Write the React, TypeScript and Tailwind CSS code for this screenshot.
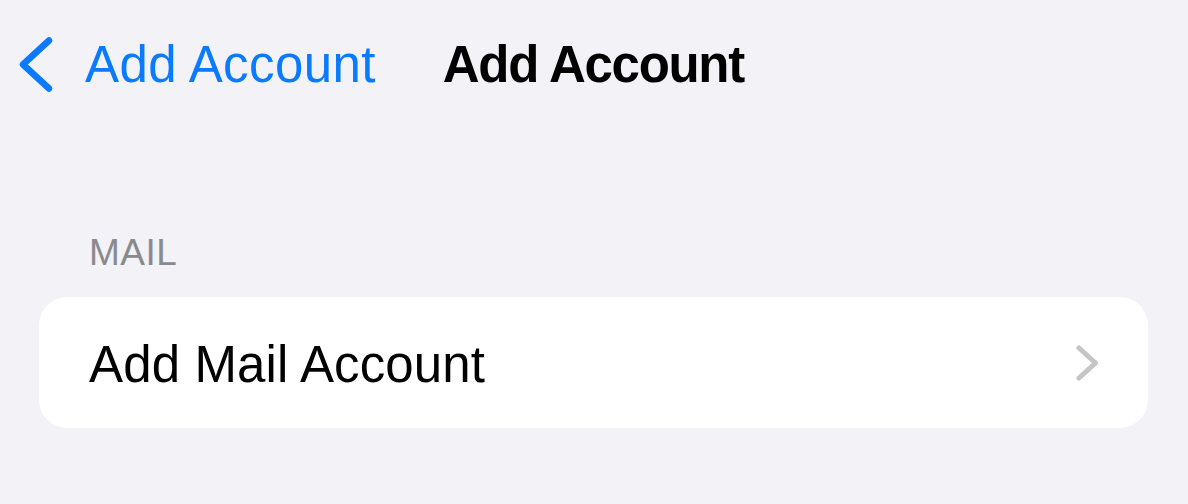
import React from "react";

export default function App() {
  const font = { fontFamily: '"Liberation Sans", Arial, sans-serif' };
  return (
    <div className="w-[1188px] h-[504px] bg-[#f2f2f7] overflow-hidden" style={font}>
      <div className="flex items-center h-[55px] mt-[37px] pl-[19px]">
        <svg width="34" height="55" viewBox="0 0 34 55" className="shrink-0">
          <polyline points="30,3.5 4,27.5 30,51.5" fill="none" stroke="#0a7aff" strokeWidth="6.5" strokeLinecap="round" strokeLinejoin="round" />
        </svg>
        <span className="ml-[32px] text-[51px] leading-[51px] tracking-[0.4px] text-[#0a7aff] whitespace-nowrap">Add Account</span>
        <span className="ml-[67px] text-[51px] leading-[51px] font-bold tracking-[-1.3px] text-black whitespace-nowrap">Add Account</span>
      </div>
      <div className="mt-[142px] pl-[89px] text-[37px] leading-[37px] tracking-[0.5px] text-[#8a8a8e]">MAIL</div>
      <div className="mt-[26px] mx-[39px] w-[1109px] h-[131px] bg-white rounded-[28px] flex items-center justify-between pl-[50px] pr-[49px]">
        <span className="mt-[4px] text-[51px] leading-[51px] tracking-[0.13px] text-black whitespace-nowrap">Add Mail Account</span>
        <svg width="23" height="36" viewBox="0 0 23 36" className="shrink-0">
          <polyline points="3,3 19.5,18 3,33" fill="none" stroke="#c4c4c7" strokeWidth="5" strokeLinecap="round" strokeLinejoin="round" />
        </svg>
      </div>
    </div>
  );
}
